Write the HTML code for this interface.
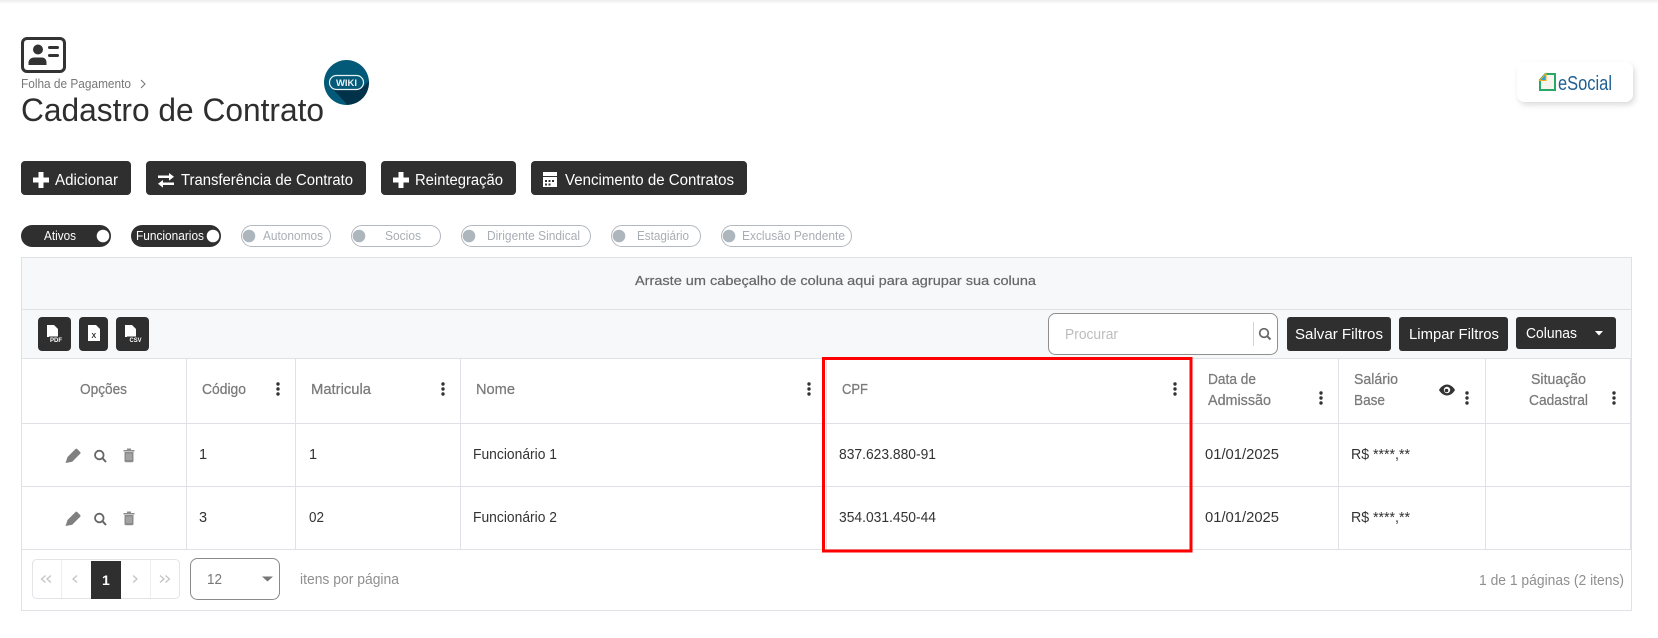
<!DOCTYPE html>
<html lang="pt-BR"><head><meta charset="utf-8"><title>Cadastro de Contrato</title>
<style>
html,body{margin:0;padding:0;background:#fff;width:1658px;height:638px;overflow:hidden}
svg{display:block;position:absolute;left:0;top:0}
text{font-family:"Liberation Sans",sans-serif}
.th{font-size:14.5px;fill:#7a7a7a;stroke:#7a7a7a;stroke-width:.25}
.td{font-size:14.5px;fill:#333}
.bt{font-size:15.5px;fill:#fff}
.bs{font-size:15px;fill:#fff}
.on{font-size:12.5px;fill:#fff}
.off{font-size:12.5px;fill:#a9aeb4}
.g{fill:#dfe1e6}
</style></head><body>
<svg width="1658" height="638" viewBox="0 0 1658 638" xmlns="http://www.w3.org/2000/svg">
<defs>
<linearGradient id="top" x1="0" y1="0" x2="0" y2="1"><stop offset="0" stop-color="#ececec"/><stop offset="1" stop-color="#fff"/></linearGradient>
<filter id="sh" x="-20%" y="-30%" width="140%" height="170%"><feDropShadow dx="2" dy="3" stdDeviation="3" flood-color="#000" flood-opacity=".14"/></filter>
<clipPath id="wc"><circle cx="346.5" cy="82.5" r="22.5"/></clipPath>
<g id="dots" fill="#333"><circle cx="0" cy="-5" r="1.7"/><circle cx="0" cy="0" r="1.7"/><circle cx="0" cy="5" r="1.7"/></g>
<path id="plus" d="M-2.5-8h5v5.500H8v5H2.500V8h-5V2.500H-8v-5h5.500z" fill="#fff"/>
<g id="ops">
<path d="M-33.500 3.500-31.500-2.500-23.500-10.500a1.200 1.200 0 0 1 1.700 0l3 3a1.200 1.200 0 0 1 0 1.700l-8 8z" fill="#808080" transform="translate(-1 3.500)"/>
<circle cx="-0.700" cy="-1" r="4.300" fill="none" stroke="#666" stroke-width="1.800"/><path d="M2.500 2.200 6 6" stroke="#666" stroke-width="2"/>
<path d="M23.500-6h11v1.500h-11zM27-7.500h4V-6h-4zM24.500-4h9V5a1.200 1.200 0 0 1-1.200 1.200h-6.600A1.200 1.200 0 0 1 24.500 5z" fill="#8b8b8b"/>
<path d="M27-2.500v6.500M29-2.500v6.500M31-2.500v6.500" stroke="#c4c4c4" stroke-width=".8"/>
</g>
</defs>

<rect width="1658" height="638" fill="#fff"/>
<rect width="1658" height="4" fill="url(#top)"/>

<!-- header icon -->
<rect x="22.500" y="38.500" width="42" height="33" rx="4.500" fill="#fff" stroke="#333" stroke-width="3"/>
<circle cx="38" cy="49.500" r="5" fill="#333"/>
<path d="M28.500 65v-2.500c0-3 3-5 5.500-5h8c2.500 0 4.500 2 4.500 5V65z" fill="#333"/>
<rect x="48" y="46" width="11" height="3" rx="1.500" fill="#333"/><rect x="48" y="54" width="11" height="3" rx="1.500" fill="#333"/>

<text x="21" y="88" font-size="12.500" fill="#777" textLength="110" lengthAdjust="spacingAndGlyphs">Folha de Pagamento</text>
<path d="M141 80 145 84 141 88" fill="none" stroke="#777" stroke-width="1.100"/>
<text x="21" y="121" font-size="32" fill="#2e2e2e" textLength="303" lengthAdjust="spacingAndGlyphs">Cadastro de Contrato</text>

<!-- wiki -->
<circle cx="346.500" cy="82.500" r="22.500" fill="#035a78"/>
<g clip-path="url(#wc)"><path d="M332 88 362 88 372 78 372 110 352 110z" fill="#01324a"/></g>
<rect x="329.500" y="75.500" width="34" height="14" rx="7" fill="#035a78" stroke="#e9f1f4" stroke-width="1.200"/>
<text x="336" y="86" font-size="9.500" font-weight="700" fill="#e9f1f4" textLength="21" lengthAdjust="spacingAndGlyphs">WIKI</text>

<!-- eSocial -->
<rect x="1517" y="62" width="116" height="40" rx="8" fill="#fff" filter="url(#sh)"/>
<path d="M1545.500 74H1555V90H1540V80z" fill="#f5f5ee" stroke="#27a869" stroke-width="2"/>
<path d="M1546 73.500 1539.500 80.500h6.500z" fill="#2b9fd8" stroke="#f0ae1e" stroke-width="1"/>
<text x="1558" y="90" font-size="20" fill="#1f5f92" textLength="54" lengthAdjust="spacingAndGlyphs">eSocial</text>

<!-- action buttons -->
<rect x="21" y="161" width="110" height="34" rx="4" fill="#2f2f2f"/>
<use href="#plus" x="41" y="180"/>
<text class="bt" x="55" y="185" textLength="63" lengthAdjust="spacingAndGlyphs">Adicionar</text>
<rect x="146" y="161" width="220" height="34" rx="4" fill="#2f2f2f"/>
<path d="M158 175.500h11V173l5 3.800-5 3.800V178h-11zM174 182.500h-11V180l-5 3.800 5 3.800V185h11z" fill="#fff"/>
<text class="bt" x="181" y="185" textLength="172" lengthAdjust="spacingAndGlyphs">Transferência de Contrato</text>
<rect x="381" y="161" width="135" height="34" rx="4" fill="#2f2f2f"/>
<use href="#plus" x="401" y="180"/>
<text class="bt" x="415" y="185" textLength="88" lengthAdjust="spacingAndGlyphs">Reintegração</text>
<rect x="531" y="161" width="216" height="34" rx="4" fill="#2f2f2f"/>
<path d="M543 172h14v4h-14zM543 177h14v10h-14z" fill="#fff"/>
<path d="M545 180h2v2h-2zM548.500 180h2v2h-2zM552 180h2v2h-2zM545 183.500h2v2h-2zM548.500 183.500h2v2h-2z" fill="#2f2f2f"/>
<text class="bt" x="565" y="185" textLength="169" lengthAdjust="spacingAndGlyphs">Vencimento de Contratos</text>

<!-- toggles -->
<rect x="21" y="225" width="90" height="22" rx="11" fill="#2f2f2f"/><circle cx="103" cy="236" r="6.300" fill="#fff"/>
<text class="on" x="44" y="240" textLength="32" lengthAdjust="spacingAndGlyphs">Ativos</text>
<rect x="131" y="225" width="90" height="22" rx="11" fill="#2f2f2f"/><circle cx="213" cy="236" r="6.300" fill="#fff"/>
<text class="on" x="136" y="240" textLength="68" lengthAdjust="spacingAndGlyphs">Funcionarios</text>
<g fill="#fff" stroke="#b3b8bf">
<rect x="241.500" y="225.500" width="89" height="21" rx="10.500"/>
<rect x="351.500" y="225.500" width="89" height="21" rx="10.500"/>
<rect x="461.500" y="225.500" width="129" height="21" rx="10.500"/>
<rect x="611.500" y="225.500" width="89" height="21" rx="10.500"/>
<rect x="721.500" y="225.500" width="130" height="21" rx="10.500"/>
</g>
<g fill="#adb5bd"><circle cx="249" cy="236" r="6.300"/><circle cx="359" cy="236" r="6.300"/><circle cx="469" cy="236" r="6.300"/><circle cx="619" cy="236" r="6.300"/><circle cx="729" cy="236" r="6.300"/></g>
<text class="off" x="263" y="240" textLength="60" lengthAdjust="spacingAndGlyphs">Autonomos</text>
<text class="off" x="385" y="240" textLength="36" lengthAdjust="spacingAndGlyphs">Socios</text>
<text class="off" x="487" y="240" textLength="93" lengthAdjust="spacingAndGlyphs">Dirigente Sindical</text>
<text class="off" x="637" y="240" textLength="52" lengthAdjust="spacingAndGlyphs">Estagiário</text>
<text class="off" x="742" y="240" textLength="103" lengthAdjust="spacingAndGlyphs">Exclusão Pendente</text>

<!-- grid frame -->
<rect x="21.500" y="257.500" width="1610" height="353" fill="#fff" stroke="#dfe1e6"/>
<rect x="22" y="258" width="1609" height="100" fill="#f7f8fa"/>
<rect class="g" x="21" y="309" width="1611" height="1"/>
<rect class="g" x="21" y="358" width="1611" height="1"/>
<rect class="g" x="21" y="423" width="1611" height="1"/>
<rect class="g" x="21" y="486" width="1611" height="1"/>
<rect class="g" x="21" y="549" width="1611" height="1"/>
<g class="g">
<rect x="186" y="358" width="1" height="191"/><rect x="295" y="358" width="1" height="191"/><rect x="460" y="358" width="1" height="191"/>
<rect x="826" y="358" width="1" height="191"/><rect x="1338" y="358" width="1" height="191"/><rect x="1485" y="358" width="1" height="191"/><rect x="1630" y="358" width="1.500" height="191"/>
</g>
<text x="635" y="285" font-size="13" fill="#666" stroke="#666" stroke-width=".2" textLength="401" lengthAdjust="spacingAndGlyphs">Arraste um cabeçalho de coluna aqui para agrupar sua coluna</text>

<!-- export buttons -->
<rect x="38" y="317" width="33" height="34" rx="4" fill="#2f2f2f"/>
<rect x="79" y="317" width="29" height="34" rx="4" fill="#2f2f2f"/>
<rect x="116" y="317" width="33" height="34" rx="4" fill="#2f2f2f"/>
<path d="M47 325h7l4 4v8h-11z" fill="#fff"/><path d="M88 325h8l4 4v12H88z" fill="#fff"/><path d="M125 325h7l4 4v8h-11z" fill="#fff"/>
<rect x="49" y="336.500" width="14" height="6" fill="#2f2f2f"/><rect x="127" y="336.500" width="15" height="6" fill="#2f2f2f"/>
<text x="50" y="342" font-size="6" font-weight="700" fill="#fff" textLength="12" lengthAdjust="spacingAndGlyphs">PDF</text>
<text x="91.500" y="338" font-size="7" font-weight="700" fill="#2f2f2f">X</text>
<text x="129.500" y="342" font-size="6" font-weight="700" fill="#fff" textLength="12" lengthAdjust="spacingAndGlyphs">CSV</text>

<!-- search -->
<rect x="1048.500" y="313.500" width="229" height="41" rx="7" fill="#fff" stroke="#8f8f8f"/>
<rect x="1253" y="322" width="1" height="24" fill="#d4d4d4"/>
<text x="1065" y="339" font-size="14.500" fill="#bdbdbd" textLength="53" lengthAdjust="spacingAndGlyphs">Procurar</text>
<circle cx="1264" cy="333" r="4.300" fill="none" stroke="#666" stroke-width="1.700"/><path d="M1267.200 336.200 1270.500 339.500" stroke="#666" stroke-width="2"/>
<rect x="1287" y="317" width="104" height="34" rx="3" fill="#2f2f2f"/>
<text class="bs" x="1295" y="339" textLength="88" lengthAdjust="spacingAndGlyphs">Salvar Filtros</text>
<rect x="1399" y="317" width="109" height="34" rx="3" fill="#2f2f2f"/>
<text class="bs" x="1409" y="339" textLength="90" lengthAdjust="spacingAndGlyphs">Limpar Filtros</text>
<rect x="1516" y="317" width="100" height="32" rx="3" fill="#2f2f2f"/>
<text class="bs" x="1526" y="338" textLength="51" lengthAdjust="spacingAndGlyphs">Colunas</text>
<path d="M1595 331h8l-4 4.500z" fill="#fff"/>

<!-- headers -->
<text class="th" x="80" y="394" textLength="47" lengthAdjust="spacingAndGlyphs">Opções</text>
<text class="th" x="202" y="394" textLength="44" lengthAdjust="spacingAndGlyphs">Código</text>
<text class="th" x="311" y="394" textLength="60" lengthAdjust="spacingAndGlyphs">Matricula</text>
<text class="th" x="476" y="394" textLength="39" lengthAdjust="spacingAndGlyphs">Nome</text>
<text class="th" x="842" y="394" textLength="26" lengthAdjust="spacingAndGlyphs">CPF</text>
<text class="th" x="1208" y="384" textLength="48" lengthAdjust="spacingAndGlyphs">Data de</text>
<text class="th" x="1208" y="405" textLength="63" lengthAdjust="spacingAndGlyphs">Admissão</text>
<text class="th" x="1354" y="384" textLength="44" lengthAdjust="spacingAndGlyphs">Salário</text>
<text class="th" x="1354" y="405" textLength="31" lengthAdjust="spacingAndGlyphs">Base</text>
<text class="th" x="1531" y="384" textLength="55" lengthAdjust="spacingAndGlyphs">Situação</text>
<text class="th" x="1529" y="405" textLength="59" lengthAdjust="spacingAndGlyphs">Cadastral</text>
<use href="#dots" x="278" y="389"/><use href="#dots" x="443" y="389"/><use href="#dots" x="809" y="389"/><use href="#dots" x="1175" y="389"/>
<use href="#dots" x="1321" y="398"/><use href="#dots" x="1467" y="398"/><use href="#dots" x="1614" y="398"/>
<!-- eye -->
<path d="M1439 390c2-3.500 5-5.500 8-5.500s6 2 8 5.500c-2 3.500-5 5.500-8 5.500s-6-2-8-5.500z" fill="#333"/>
<circle cx="1447" cy="390" r="3.200" fill="#fff"/><circle cx="1446.500" cy="390.500" r="1.800" fill="#333"/>

<!-- rows -->
<use href="#ops" x="100" y="456"/>
<use href="#ops" x="100" y="519"/>
<text class="td" x="199" y="459">1</text><text class="td" x="309" y="459">1</text>
<text class="td" x="473" y="459" textLength="84" lengthAdjust="spacingAndGlyphs">Funcionário 1</text>
<text class="td" x="839" y="459" textLength="97" lengthAdjust="spacingAndGlyphs">837.623.880-91</text>
<text class="td" x="1205" y="459" textLength="74" lengthAdjust="spacingAndGlyphs">01/01/2025</text>
<text class="td" x="1351" y="459" textLength="59" lengthAdjust="spacingAndGlyphs">R$ ****,**</text>
<text class="td" x="199" y="522">3</text><text class="td" x="309" y="522" textLength="15" lengthAdjust="spacingAndGlyphs">02</text>
<text class="td" x="473" y="522" textLength="84" lengthAdjust="spacingAndGlyphs">Funcionário 2</text>
<text class="td" x="839" y="522" textLength="97" lengthAdjust="spacingAndGlyphs">354.031.450-44</text>
<text class="td" x="1205" y="522" textLength="74" lengthAdjust="spacingAndGlyphs">01/01/2025</text>
<text class="td" x="1351" y="522" textLength="59" lengthAdjust="spacingAndGlyphs">R$ ****,**</text>

<!-- red highlight -->
<rect x="823.500" y="358.500" width="367.500" height="192.500" fill="none" stroke="#fe0000" stroke-width="3"/>

<!-- pager -->
<rect x="32.500" y="559.500" width="147" height="39" rx="4" fill="#fff" stroke="#e3e4e8"/>
<rect x="61" y="560" width="1" height="38" fill="#eceded"/><rect x="150" y="560" width="1" height="38" fill="#eceded"/>
<rect x="91" y="561" width="30" height="38" fill="#2f2f2f"/>
<text x="102" y="585" font-size="14" font-weight="700" fill="#fff">1</text>
<g fill="none" stroke="#c4c4c4" stroke-width="1.300">
<path d="M45.500 575.500 41.500 579 45.500 582.500M51 575.500 47 579 51 582.500"/>
<path d="M77 575.500 73 579 77 582.500"/>
<path d="M133 575.500 137 579 133 582.500"/>
<path d="M160 575.500 164 579 160 582.500M165.500 575.500 169.500 579 165.500 582.500"/>
</g>
<rect x="190.500" y="558.500" width="89" height="41" rx="7" fill="#fff" stroke="#8a8a8a"/>
<text x="207" y="584" font-size="14.500" fill="#777" textLength="15" lengthAdjust="spacingAndGlyphs">12</text>
<path d="M262 576.500h11l-5.500 5z" fill="#777"/>
<text x="300" y="584" font-size="14.500" fill="#8f8f8f" textLength="99" lengthAdjust="spacingAndGlyphs">itens por página</text>
<text x="1479" y="585" font-size="14.500" fill="#8f8f8f" textLength="145" lengthAdjust="spacingAndGlyphs">1 de 1 páginas (2 itens)</text>
</svg>
</body></html>
